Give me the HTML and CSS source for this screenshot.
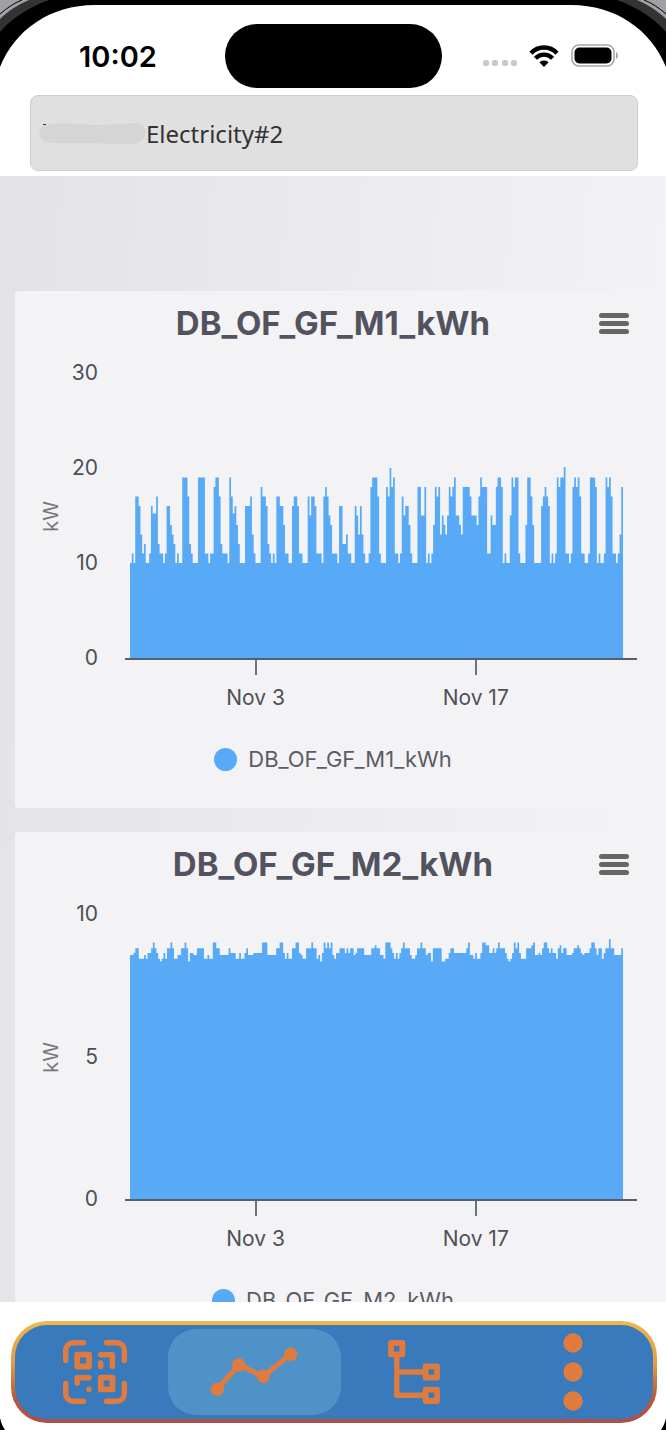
FILE: index.html
```html
<!DOCTYPE html>
<html lang="en">
<head>
    <meta charset="UTF-8">
    <meta name="viewport" content="width=device-width, initial-scale=1.0">
    <title>Electricity</title>
    <link rel="stylesheet" href="styles.css">
</head>
<body>
    <div class="phone">
      <header class="top">
        <div class="status">
          <span class="time">10:02</span>
          <span class="island"></span>
          <div class="signals">
            <svg class="dots" viewBox="0 0 34 22" width="34" height="22" fill="#c9c9c9">
              <rect x="0" y="15" width="6" height="6" rx="2" />
              <rect x="9" y="15" width="6" height="6" rx="2" />
              <rect x="19" y="15" width="6" height="6" rx="2" />
              <rect x="28" y="15" width="6" height="6" rx="2" />
            </svg>
            <svg viewBox="0 0 30 22" width="30" height="22">
              <g fill="none" stroke="#000" stroke-width="4.4">
                <path d="M2 8.2C9 .6 21 .6 28 8.2" />
                <path d="M6.4 13.2C11.2 8.4 18.8 8.4 23.6 13.2" />
              </g>
              <path d="M15 22L10.4 17.2C13 14.8 17 14.8 19.6 17.2Z" />
            </svg>
            <svg viewBox="0 0 48 24" width="48" height="24">
              <rect x="1" y="1" width="42" height="21" rx="7" fill="none" stroke="#a6a6a6" stroke-width="1.6" />
              <rect x="3.5" y="3.5" width="37" height="16" rx="5" />
              <path d="M45 8C47.6 9 47.6 14 45 15Z" fill="#a6a6a6" />
            </svg>
          </div>
        </div>
        <label class="meter">
          <svg class="smudge" viewBox="0 0 107 24" width="107" height="24">
            <path d="M4 3.5H7M5 18L7 20" stroke="#333" stroke-width="1" />
            <path d="M9 3C25 1 45 4 62 4L98 2C110 4 109 19 98 22C85 25 68 22 50 22H12C-3 20-3 6 9 3Z" fill="#d5d5d5" />
          </svg>
          <input type="text" class="meter-name" value="Electricity#2" aria-label="Meter">
        </label>
      </header>

      <main class="content">
        <section class="card">
          <div class="card-head">
            <h2>DB_OF_GF_M1_kWh</h2>
            <button type="button" class="menu" aria-label="Chart menu"><i></i><i></i><i></i></button>
          </div>
          <div class="chart">
            <span class="unit">kW</span>
            <div class="scale"><span>30</span><span>20</span><span>10</span><span>0</span></div>
            <svg class="plot" id="m1" viewBox="0 0 512 285" preserveAspectRatio="none"></svg>
            <div class="dates"><span>Nov 3</span><span>Nov 17</span></div>
          </div>
          <div class="legend"><i></i>DB_OF_GF_M1_kWh</div>
        </section>

        <section class="card">
          <div class="card-head">
            <h2>DB_OF_GF_M2_kWh</h2>
            <button type="button" class="menu" aria-label="Chart menu"><i></i><i></i><i></i></button>
          </div>
          <div class="chart">
            <span class="unit">kW</span>
            <div class="scale"><span>10</span><span>5</span><span>0</span></div>
            <svg class="plot" id="m2" viewBox="0 0 512 285" preserveAspectRatio="none"></svg>
            <div class="dates"><span>Nov 3</span><span>Nov 17</span></div>
          </div>
          <div class="legend"><i></i>DB_OF_GF_M2_kWh</div>
        </section>
      </main>

      <footer class="bottom">
        <nav class="tabs">
          <button type="button" class="tab" aria-label="Scan">
            <svg viewBox="0 0 64 64" width="64" height="64" fill="none" stroke="#e07b3f" stroke-width="5.4" stroke-linecap="round" stroke-linejoin="round">
              <path d="M2.7 20.6V10A7.3 7.3 0 0 1 10 2.7H20.6M43.4 2.7H54A7.3 7.3 0 0 1 61.3 10V20.6M61.3 43.4V54A7.3 7.3 0 0 1 54 61.3H43.4M20.6 61.3H10A7.3 7.3 0 0 1 2.7 54V43.4" />
              <path d="M14.2 14.7H26V26.5H14.2ZM37.8 37.7H49.5V49.4H37.8Z" stroke-width="5.8" />
              <path d="M37.7 14.7H49.4V26.5M37.7 23V26.5M26 37.7H14.2V43M26 49.1V49.2" />
            </svg>
          </button>
          <button type="button" class="tab active" aria-label="Charts">
            <svg viewBox="0 0 88 64" width="88" height="64" fill="#e07b3f">
              <path d="M7.3 49.3L28.7 25L53.3 36.3L80.7 14.3" fill="none" stroke="#e07b3f" stroke-width="5.2" />
              <circle cx="7.3" cy="49.3" r="6.7" />
              <circle cx="28.7" cy="25" r="6.7" />
              <circle cx="53.3" cy="36.3" r="6.7" />
              <circle cx="80.7" cy="14.3" r="6.7" />
            </svg>
          </button>
          <button type="button" class="tab" aria-label="Tree">
            <svg viewBox="0 0 52 64" width="52" height="64" fill="none" stroke="#e07b3f" stroke-width="5.4" stroke-linejoin="round">
              <path d="M8.8 14V55.3H36M8.8 32H36" />
              <path d="M3 3H14.4V14.4H3ZM37.6 26.3H49V37.7H37.6ZM37.6 49.6H49V61H37.6Z" stroke-width="5.8" />
            </svg>
          </button>
          <button type="button" class="tab" aria-label="More">
            <svg viewBox="0 0 20 78" width="20" height="78" fill="#e07b3f">
              <circle cx="10" cy="10" r="9.7" />
              <circle cx="10" cy="39" r="9.7" />
              <circle cx="10" cy="68" r="9.7" />
            </svg>
          </button>
        </nav>
      </footer>

      <svg class="corner top-left" viewBox="0 0 120 70"><use href="#bezel" /></svg>
      <svg class="corner top-right" viewBox="0 0 120 70"><use href="#bezel" /></svg>
      <svg class="corner bottom-left" viewBox="0 0 120 70"><path d="M0 0H5C3 3 1 7 0 12Z" /></svg>
      <svg class="corner bottom-right" viewBox="0 0 120 70"><path d="M0 0H5C3 3 1 7 0 12Z" /></svg>
      <svg width="0" height="0" class="defs">
        <defs>
          <g id="bezel">
            <path d="M0 0H120V5H95C50 5 15 30 0 67Z" />
            <path d="M0 0H49C29 7 11 19 0 32Z" fill="#333" />
            <path d="M0 0H29C19 4 8 11 0 19Z" fill="#a0a1a4" />
            <path d="M0 14C7 8 14 3 22 0" fill="none" stroke="#000" stroke-width="1" />
          </g>
        </defs>
      </svg>
    </div>

    <script>
        // nine readings for each day
        const m1 = [
            10,11,10,17,17,16,13,11,12,
            10,10,11,16,15.2,15.2,17,12,11,
            11,10,11,16,16,14,13,12,10,
            11,10,10,19,19,19,17,12,11,
            10,10,10,19,19,19,19,11,11,
            10,11,11,18,19,19,17,12,11,
            11,11,10,19,17,15.2,16,14,12,
            10,10,10,16,16,16,17,13,11,
            10,10,10,18,17,17,16,12,11,
            10,11,10,17,17,16,16,14,11,
            11,10,10,16,17,17,16,11,11,
            10,10,10,17,15,17,17,16,11,
            11,11,10,17,18,17,15,14,11,
            11,11,10,16,16,12,12,13,11,
            11,10,10,16,15,13,16,13,11,
            10,10,11,18,19,19,19,17,11,
            10,10,10,18,17,20,18,19,11,
            11,10,11,17,15,16,16,14,11,
            10,10,10,18,18,15,15,18,10,
            11,10,11,14,18,17,18,13,15,
            14,13,15,18,17,18,19,15,15,
            14,13,18,18,18,18,17,15,15,
            15,14,17,19,18,18,18,11,11,
            15,14,14,18,19,19,18,10,11,
            10,10,15,19,18,19,19,11,10,
            10,10,14,19,19,17,14,10,10,
            10,10,16,17,18,17,16,10,11,
            10,11,19,18,19,19,20.1,11,11,
            10,11,18,19,18,19,17,11,11,
            10,10,11,19,19,19,18,10,11,
            10,10,11,19,18,19,17,11,11,
            10,11,13,18
        ]

        // one letter for each reading, see levels
        const levels = { 3: 8.33, 4: 8.43, 5: 8.56, 6: 8.63, 8: 8.8, 9: 8.9, 0: 9, p: 9.12 }
        const m2 = ("556884445466808643464880844558808366558888445440088555558666446446" +
            "8555666660005555588006464488006544888088453608080546688868688568888555588988" +
            "554000864646808885445880885663888883344688666666680554644600996686808886434" +
            "6080644488890556580086866489688555688986566680085884688p8855558").split("").map(c => levels[c])

        function drawPlot(id, data, max) {
            const step = 493 / data.length
            let d = "M5 285"
            data.forEach((value, i) => {
                const y = (285 - value / max * 285).toFixed(1)
                d += `V${y}H${(5 + (i + 1) * step).toFixed(2)}`
            })
            document.getElementById(id).innerHTML = `<path d="${d}V285Z" />`
        }

        drawPlot("m1", m1, 30)
        drawPlot("m2", m2, 10)
    </script>
</body>
</html>
```
FILE: styles.css
```css
* {
    box-sizing: border-box;
}

body {
    margin: 0;
    font-family: Inter, "Liberation Sans", sans-serif;
    background-color: #fff;
}

button {
    border: none;
    padding: 0;
    background: none;
    cursor: pointer;
}

.phone {
    position: relative;
    display: flex;
    flex-direction: column;
    height: 100vh;
    padding-top: 5px;
    overflow: hidden;
    background: linear-gradient(#000 5px, #fff 5px);
}

/* Status bar */
.status {
    display: grid;
    grid-template-columns: 1fr 217px 1fr;
    align-items: center;
    height: 90px;
    padding-top: 12px;
}

.time {
    padding-left: 79px;
    font-size: 29px;
    font-weight: 600;
}

.island {
    height: 64px;
    border-radius: 32px;
    background-color: #000;
}

.signals {
    display: flex;
    justify-content: flex-end;
    align-items: center;
    gap: 12px;
    padding-right: 47px;
}

.meter {
    display: flex;
    align-items: center;
    height: 76px;
    margin: 0 28px 5px 30px;
    padding-left: 8px;
    border: 1px solid #cfcfcf;
    border-radius: 8px;
    background-color: #e0e0e0;
}

.smudge {
    flex: none;
}

.meter-name {
    flex: 1;
    min-width: 0;
    padding: 0;
    border: none;
    outline: none;
    background: none;
    color: #333;
    font-family: "Noto Sans", sans-serif;
    font-size: 24px;
}

/* Cards */
.content {
    flex: 1;
    display: flex;
    flex-direction: column;
    gap: 24px;
    min-height: 0;
    padding: 115px 15px 24px;
    overflow: auto;
    scrollbar-width: none;
    background: linear-gradient(95deg, #e3e3e7, #f3f3f6 90%);
}

.card {
    flex: none;
    height: 517px;
    border-radius: 4px;
    background-color: #f3f3f6;
}

.card-head {
    display: grid;
    grid-template-columns: 1fr auto 1fr;
    align-items: center;
    height: 64px;
    padding: 0 22px;
}

.card-head h2 {
    grid-column: 2;
    margin: 0;
    color: #53535f;
    font-size: 33px;
    line-height: 40px;
}

.menu {
    display: flex;
    flex-direction: column;
    gap: 3px;
    justify-self: end;
    width: 30px;
}

.menu i {
    height: 5px;
    border-radius: 3px;
    background-color: #666;
}

/* Charts */
.chart {
    display: grid;
    grid-template-columns: 20px 37px 1fr;
    grid-template-rows: 287px auto;
    padding: 18px 14px 0 26px;
    color: #4f4f55;
    font-size: 21px;
    line-height: 24px;
}

.unit {
    align-self: center;
    justify-self: center;
    writing-mode: vertical-rl;
    transform: rotate(180deg);
    color: #777;
    font-size: 20px;
}

.scale {
    display: flex;
    flex-direction: column;
    justify-content: space-between;
    margin: -12px 0 -10px;
    text-align: right;
}

.plot {
    width: calc(100% - 27px);
    height: 287px;
    margin-left: 27px;
    border-bottom: 2px solid #55606e;
    fill: #58aaf7;
}

.dates {
    grid-column: 3;
    display: grid;
    grid-template-columns: 51fr 35fr 14fr;
    margin-left: 27px;
    text-align: center;
}

.dates span::before {
    content: "";
    display: block;
    width: 2px;
    height: 15px;
    margin: 0 auto 11px;
    background-color: #6b7480;
}

.legend {
    display: flex;
    justify-content: center;
    align-items: center;
    gap: 11px;
    margin-top: 37px;
    color: #5c5c64;
    font-size: 22px;
    line-height: 24px;
}

.legend i {
    width: 23px;
    height: 23px;
    border-radius: 50%;
    background-color: #58aaf7;
}

/* Bottom tabs */
.bottom {
    flex: none;
    padding: 19px 9px 7px 11px;
}

.tabs {
    display: grid;
    grid-template-columns: repeat(4, 1fr);
    height: 102px;
    padding: 4px 0;
    border: 4px solid transparent;
    border-radius: 36px;
    background: linear-gradient(#387abb, #387abb) padding-box,
                linear-gradient(#edb84b, #e0a045 40%, #b8593f 75%, #a8504a) border-box;
}

.tab {
    display: flex;
    justify-content: center;
    align-items: center;
}

.tab.active {
    margin: 0 -7px;
    border-radius: 28px;
    background-color: #4e92c8;
}

/* Rounded corners of the device */
.corner {
    position: absolute;
    width: 120px;
    height: 70px;
    pointer-events: none;
}

.top-left {
    top: 0;
    left: 0;
}

.top-right {
    top: 0;
    right: 0;
    transform: scaleX(-1);
}

.bottom-left {
    bottom: 0;
    left: 0;
    transform: scaleY(-1);
}

.bottom-right {
    bottom: 0;
    right: 0;
    transform: scale(-1, -1);
}

.defs {
    position: absolute;
}
```
